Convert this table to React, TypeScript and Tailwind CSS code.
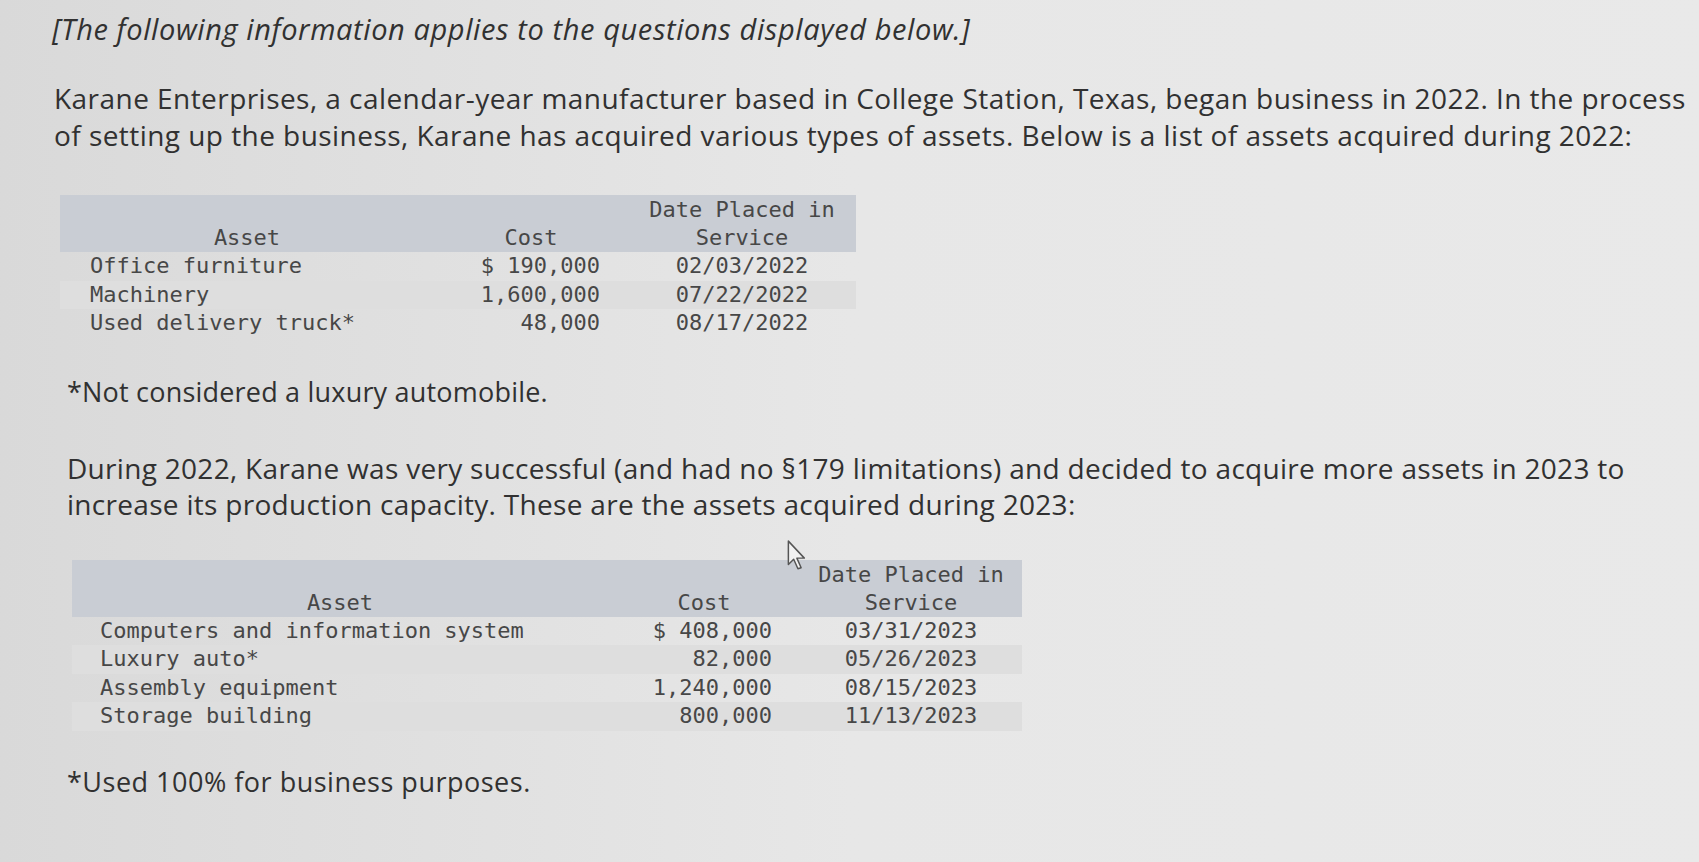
const prose = "font-['Open_Sans','Lato',sans-serif] text-[#313131]"
const mono = "font-['DejaVu_Sans_Mono','Liberation_Mono',monospace] text-[22px] leading-[28px] text-[#474747]"

type Row = { asset: string; cost: string; date: string }

const rows2022: Row[] = [
  { asset: 'Office furniture', cost: '$ 190,000', date: '02/03/2022' },
  { asset: 'Machinery', cost: '1,600,000', date: '07/22/2022' },
  { asset: 'Used delivery truck*', cost: '48,000', date: '08/17/2022' },
]

const rows2023: Row[] = [
  { asset: 'Computers and information system', cost: '$ 408,000', date: '03/31/2023' },
  { asset: 'Luxury auto*', cost: '82,000', date: '05/26/2023' },
  { asset: 'Assembly equipment', cost: '1,240,000', date: '08/15/2023' },
  { asset: 'Storage building', cost: '800,000', date: '11/13/2023' },
]

function Cursor() {
  return (
    <svg className="absolute left-[-14px] top-[-22px]" width="26" height="34" viewBox="0 0 24 32">
      <path d="M2 2 L2 24 L7 19 L11 28 L14 27 L10 18 L17 18 Z" fill="#f2f2f2" stroke="#555" strokeWidth="1.4" strokeLinejoin="round" />
    </svg>
  )
}

function AssetTable({ rows, cols, pad, cursor }: { rows: Row[]; cols: string; pad: string; cursor?: boolean }) {
  return (
    <div className={mono}>
      <div className={`grid ${cols} bg-[#c9cdd4] h-[57px]`}>
        <div className="self-end text-center">Asset</div>
        <div className="self-end text-center">Cost</div>
        <div className="relative self-end text-center">
          {cursor && <Cursor />}
          Date Placed in
          <br />
          Service
        </div>
      </div>
      {rows.map((r, i) => (
        <div key={r.asset} className={`grid ${cols} h-[28.5px] ${i % 2 === 1 ? 'bg-[#dedede]' : ''}`}>
          <div className={pad}>{r.asset}</div>
          <div className="text-right pr-[28px]">{r.cost}</div>
          <div className="text-center">{r.date}</div>
        </div>
      ))}
    </div>
  )
}

export default function App() {
  return (
    <div className="min-h-[862px] w-full bg-linear-to-r from-[#d9d9d9] via-[#e7e7e7] to-[#e9e9e9] overflow-hidden">
      <div className={`${prose} pt-[10px] pl-[52px] text-[29px] leading-[38px] tracking-[0.6px] italic`}>
        [The following information applies to the questions displayed below.]
      </div>
      <p className={`${prose} mt-[32px] pl-[54px] text-[28px] leading-[37px] tracking-[0.45px] whitespace-nowrap`}>
        Karane Enterprises, a calendar-year manufacturer based in College Station, Texas, began business in 2022. In the process
        <br />
        of setting up the business, Karane has acquired various types of assets. Below is a list of assets acquired during 2022:
      </p>
      <div className="mt-[41px] ml-[60px] w-[796px]">
        <AssetTable rows={rows2022} cols="grid-cols-[374px_194px_228px]" pad="pl-[30px]" />
      </div>
      <p className={`${prose} mt-[36px] pl-[67px] text-[27px] leading-[36px] tracking-[0.2px]`}>*Not considered a luxury automobile.</p>
      <p className={`${prose} mt-[40px] pl-[67px] text-[28px] leading-[36px] tracking-[0.3px] whitespace-nowrap`}>
        During 2022, Karane was very successful (and had no §179 limitations) and decided to acquire more assets in 2023 to
        <br />
        increase its production capacity. These are the assets acquired during 2023:
      </p>
      <div className="mt-[38px] ml-[72px] w-[950px]">
        <AssetTable rows={rows2023} cols="grid-cols-[536px_192px_222px]" pad="pl-[28px]" cursor />
      </div>
      <p className={`${prose} mt-[33px] pl-[67px] text-[27px] leading-[36px] tracking-[0.5px]`}>*Used 100% for business purposes.</p>
    </div>
  )
}
